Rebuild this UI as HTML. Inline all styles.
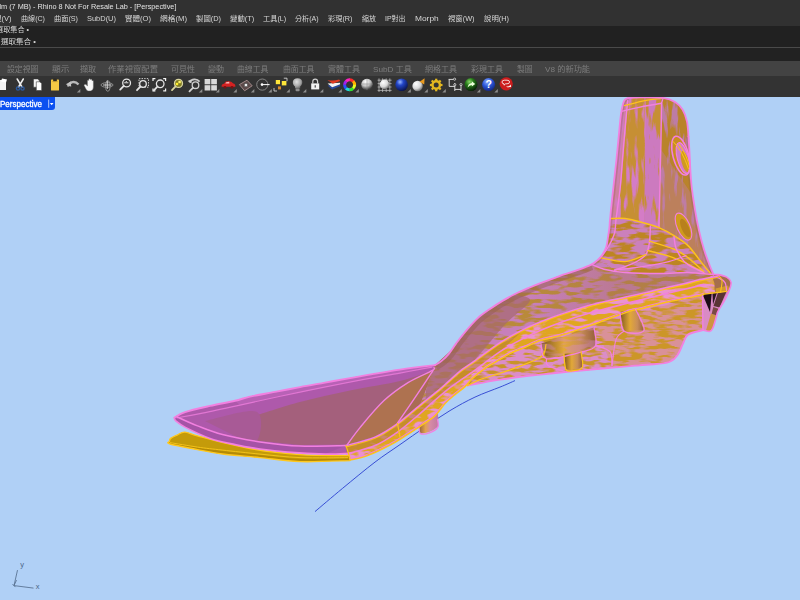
<!DOCTYPE html>
<html lang="zh-Hant">
<head>
<meta charset="utf-8">
<title>Rhino 8 - Perspective</title>
<style>
html,body{margin:0;padding:0;}
body{width:800px;height:600px;overflow:hidden;background:#b0d0f6;font-family:"Liberation Sans","Noto Sans CJK TC",sans-serif;position:relative;}
.abs{position:absolute;white-space:nowrap;}
#title{left:0;top:0;width:800px;height:13px;background:#313131;}
#menu{left:0;top:13px;width:800px;height:13px;background:#313131;}
#hist{left:0;top:26px;width:800px;height:21px;background:#212121;}
#sep{left:0;top:47px;width:800px;height:1px;background:#4a4a4a;}
#cmd{left:0;top:48px;width:800px;height:13px;background:#222222;}
#tabs{left:0;top:61px;width:800px;height:15px;background:#434343;}
#tools{left:0;top:76px;width:800px;height:21.4px;background:#333333;}
#vp{left:0;top:97px;width:800px;height:503px;background:#b0d0f6;}
#persp{left:0;top:97px;width:55px;height:13px;background:#0b50f0;border-radius:0 0 3px 0;}
.t{position:absolute;white-space:nowrap;transform-origin:0 50%;display:block;}
</style>
</head>
<body>
<div id="vp" class="abs"></div>
<div id="title" class="abs"></div>
<div id="menu" class="abs"></div>
<div id="hist" class="abs"></div>
<div id="sep" class="abs"></div>
<div id="cmd" class="abs"></div>
<div id="tabs" class="abs"></div>
<div id="tools" class="abs"></div>
<div id="persp" class="abs"></div>
<svg id="model" class="abs" style="left:0;top:97.4px;overflow:hidden" width="800" height="502.6" viewBox="0 97.4 800 502.6">
<defs>
<filter id="mH" x="0" y="0" width="100%" height="100%">
<feTurbulence type="fractalNoise" baseFrequency="0.07 0.26" numOctaves="2" seed="7" result="n"/>
<feColorMatrix in="n" type="matrix" values="0 0 0 0 0  0 0 0 0 0  0 0 0 0 0  5 5 0 0 -4.4" result="m"/>
<feGaussianBlur in="m" stdDeviation="0.45" result="mb"/>
<feComposite in="SourceGraphic" in2="mb" operator="in"/>
</filter>
<filter id="mH2" x="0" y="0" width="100%" height="100%">
<feTurbulence type="fractalNoise" baseFrequency="0.06 0.2" numOctaves="2" seed="21" result="n"/>
<feColorMatrix in="n" type="matrix" values="0 0 0 0 0  0 0 0 0 0  0 0 0 0 0  5 5 0 0 -4.55" result="m"/>
<feGaussianBlur in="m" stdDeviation="0.45" result="mb"/>
<feComposite in="SourceGraphic" in2="mb" operator="in"/>
</filter>
<filter id="mV" x="0" y="0" width="100%" height="100%">
<feTurbulence type="fractalNoise" baseFrequency="0.14 0.025" numOctaves="3" seed="5" result="n"/>
<feColorMatrix in="n" type="matrix" values="0 0 0 0 0  0 0 0 0 0  0 0 0 0 0  5 5 0 0 -4.85" result="m"/>
<feGaussianBlur in="m" stdDeviation="0.45" result="mb"/>
<feComposite in="SourceGraphic" in2="mb" operator="in"/>
</filter>
<filter id="mV2" x="0" y="0" width="100%" height="100%">
<feTurbulence type="fractalNoise" baseFrequency="0.16 0.03" numOctaves="3" seed="11" result="n"/>
<feColorMatrix in="n" type="matrix" values="0 0 0 0 0  0 0 0 0 0  0 0 0 0 0  5 5 0 0 -5.15" result="m"/>
<feGaussianBlur in="m" stdDeviation="0.45" result="mb"/>
<feComposite in="SourceGraphic" in2="mb" operator="in"/>
</filter>
<filter id="mB" x="0" y="0" width="100%" height="100%">
<feTurbulence type="fractalNoise" baseFrequency="0.07 0.2" numOctaves="2" seed="33" result="n"/>
<feColorMatrix in="n" type="matrix" values="0 0 0 0 0  0 0 0 0 0  0 0 0 0 0  5 5 0 0 -4.85" result="m"/>
<feGaussianBlur in="m" stdDeviation="0.45" result="mb"/>
<feComposite in="SourceGraphic" in2="mb" operator="in"/>
</filter>
<filter id="mH3" x="0" y="0" width="100%" height="100%">
<feTurbulence type="fractalNoise" baseFrequency="0.06 0.22" numOctaves="2" seed="14" result="n"/>
<feColorMatrix in="n" type="matrix" values="0 0 0 0 0  0 0 0 0 0  0 0 0 0 0  5 5 0 0 -4.3" result="m"/>
<feGaussianBlur in="m" stdDeviation="0.45" result="mb"/>
<feComposite in="SourceGraphic" in2="mb" operator="in"/>
</filter>
<clipPath id="cBody"><path d="M628.0 98.5 C630.0 98.4 634.2 97.8 640.0 97.8 C645.8 97.8 657.2 97.5 663.0 98.3 C668.8 99.1 671.8 100.5 675.0 102.5 C678.2 104.5 680.5 106.8 682.5 110.0 C684.5 113.2 686.0 117.5 687.0 122.0 C688.0 126.5 688.2 134.5 688.5 137.0 L688.5 137.0 C688.7 139.6 689.2 146.6 689.5 152.5 C689.8 158.4 690.1 166.2 690.5 172.5 C690.9 178.8 691.2 183.8 692.0 190.0 C692.8 196.2 693.9 203.3 695.0 210.0 C696.1 216.7 697.3 223.3 698.8 230.0 C700.3 236.7 702.1 243.9 704.0 250.0 C705.9 256.1 708.4 262.5 710.0 266.7 C711.6 270.9 712.9 273.6 713.5 275.0 L713.5 275.0 C714.2 275.2 717.2 276.2 718.0 276.5 L718.0 276.5 C715.0 277.1 705.5 278.8 700.0 280.0 C694.5 281.2 691.7 282.2 685.0 283.8 C678.3 285.4 668.3 287.6 660.0 289.5 C651.7 291.4 645.0 293.2 635.0 295.5 C625.0 297.8 610.0 300.6 600.0 303.0 C590.0 305.4 583.3 307.4 575.0 310.0 C566.7 312.6 558.3 315.3 550.0 318.5 C541.7 321.7 533.3 324.9 525.0 329.0 C516.7 333.1 508.3 337.7 500.0 343.0 C491.7 348.3 481.7 356.2 475.0 361.0 C468.3 365.8 465.7 366.9 460.0 371.5 C454.3 376.1 447.7 382.8 441.0 388.5 C434.3 394.2 423.5 402.7 420.0 405.5 L420.0 405.5 C421.3 402.1 425.5 391.7 428.0 385.0 C430.5 378.3 433.8 368.8 435.0 365.5 L435.0 365.5 C436.2 364.8 439.7 362.9 442.0 361.0 C444.3 359.1 446.7 356.8 449.0 354.0 C451.3 351.2 453.3 347.6 456.0 344.0 C458.7 340.4 461.4 336.7 465.0 332.5 C468.6 328.3 473.3 322.7 477.5 318.8 C481.7 314.9 485.8 312.3 490.0 309.4 C494.2 306.5 498.3 303.8 502.5 301.3 C506.7 298.8 510.8 296.5 515.0 294.4 C519.2 292.3 523.3 290.6 527.5 288.8 C531.7 287.0 534.6 285.9 540.0 283.8 C545.4 281.7 553.5 278.5 560.0 276.2 C566.5 273.9 573.6 271.9 578.8 270.0 C584.0 268.1 588.1 266.6 591.2 265.0 C594.3 263.4 595.6 262.3 597.5 260.6 C599.4 258.9 601.0 257.2 602.5 255.0 C604.0 252.8 605.3 250.4 606.2 247.5 C607.1 244.6 607.5 240.8 608.0 237.5 C608.5 234.2 609.1 230.9 609.4 228.0 C609.7 225.1 609.6 223.8 610.0 220.0 C610.4 216.2 610.8 211.3 611.5 205.0 C612.2 198.7 613.2 189.6 614.0 182.0 C614.8 174.4 615.7 167.0 616.5 159.5 C617.3 152.0 618.0 144.5 618.7 137.0 C619.5 129.5 620.1 120.4 621.0 114.5 C621.9 108.6 622.8 104.2 624.0 101.5 C625.2 98.8 627.3 99.0 628.0 98.5 Z"/></clipPath>
</defs>
<path d="M515.0 381.0 C512.5 382.1 506.7 384.8 500.0 387.5 C493.3 390.2 483.3 393.6 475.0 397.5 C466.7 401.4 458.3 406.0 450.0 411.0 C441.7 416.0 433.3 421.8 425.0 427.5 C416.7 433.2 408.3 439.2 400.0 445.0 C391.7 450.8 384.6 455.2 375.0 462.5 C365.4 469.8 352.5 480.6 342.5 488.8 C332.5 497.1 319.6 508.1 315.0 512.0" fill="none" stroke="#2a3fd0" stroke-width="0.9"/>
<path d="M169.4 441.9 C169.6 441.4 169.3 439.9 170.6 438.8 C171.9 437.7 174.6 436.6 177.0 435.5 C179.4 434.4 181.2 432.2 185.0 432.5 C188.8 432.8 189.2 434.2 200.0 437.0 C210.8 439.8 233.3 446.0 250.0 449.0 C266.7 452.0 283.3 453.8 300.0 455.0 C316.7 456.2 341.7 455.8 350.0 456.0 L350.0 461.0 C341.7 461.2 315.0 462.5 300.0 462.0 C285.0 461.5 272.9 459.3 260.0 458.0 C247.1 456.7 232.9 455.7 222.5 454.4 C212.1 453.1 206.2 451.7 197.5 450.0 C188.8 448.3 174.7 445.8 170.0 444.4 C165.3 443.0 169.5 442.3 169.4 441.9 Z" fill="#c49b0a"/>
<path d="M170.0 443.0 C174.6 443.8 188.8 446.6 197.5 448.0 C206.2 449.4 212.1 450.2 222.5 451.5 C232.9 452.8 247.1 454.2 260.0 455.5 C272.9 456.8 285.0 458.9 300.0 459.5 C315.0 460.1 341.7 459.1 350.0 459.0 L350.0 461.0 C341.7 461.2 315.0 462.5 300.0 462.0 C285.0 461.5 272.9 459.3 260.0 458.0 C247.1 456.7 232.9 455.7 222.5 454.4 C212.1 453.1 206.2 451.7 197.5 450.0 C188.8 448.3 174.6 445.3 170.0 444.4 Z" fill="#b48a06"/>
<path d="M169.4 441.9 C169.6 441.4 169.3 439.9 170.6 438.8 C171.9 437.7 174.6 436.6 177.0 435.5 C179.4 434.4 181.2 432.2 185.0 432.5 C188.8 432.8 189.2 434.2 200.0 437.0 C210.8 439.8 233.3 446.0 250.0 449.0 C266.7 452.0 283.3 453.8 300.0 455.0 C316.7 456.2 341.7 455.8 350.0 456.0 L350.0 461.0 C341.7 461.2 315.0 462.5 300.0 462.0 C285.0 461.5 272.9 459.3 260.0 458.0 C247.1 456.7 232.9 455.7 222.5 454.4 C212.1 453.1 206.2 451.7 197.5 450.0 C188.8 448.3 174.7 445.8 170.0 444.4 C165.3 443.0 169.5 442.3 169.4 441.9 Z" fill="none" stroke="#ffc81e" stroke-width="1.4" stroke-linejoin="round"/>
<path d="M170.0 443.0 C174.6 443.8 188.8 446.2 197.5 447.5 C206.2 448.8 212.1 449.3 222.5 450.5 C232.9 451.7 247.1 453.2 260.0 454.5 C272.9 455.8 285.3 457.4 300.0 458.0 C314.7 458.6 340.0 458.0 348.0 458.0" fill="none" stroke="#f2c21a" stroke-width="1.0"/>
<path d="M435.0 365.5 C429.2 366.2 414.2 367.8 400.0 370.0 C385.8 372.2 362.5 376.3 350.0 378.5 C337.5 380.7 333.3 381.5 325.0 383.0 C316.7 384.5 308.3 385.9 300.0 387.5 C291.7 389.1 283.3 390.7 275.0 392.3 C266.7 393.9 256.7 395.5 250.0 397.0 C243.3 398.5 241.7 399.6 235.0 401.2 C228.3 402.8 218.3 404.4 210.0 406.3 C201.7 408.2 190.9 410.6 185.0 412.5 C179.1 414.4 176.2 417.1 174.4 418.0 L174.4 418.5 C174.7 419.0 174.2 420.0 176.0 421.5 C177.8 423.0 179.3 424.6 185.0 427.5 C190.7 430.4 201.7 435.9 210.0 438.8 C218.3 441.7 226.7 443.2 235.0 445.0 C243.3 446.8 251.2 448.1 260.0 449.4 C268.8 450.6 276.7 451.6 287.5 452.5 C298.3 453.4 314.6 454.3 325.0 454.5 C335.4 454.7 345.8 453.9 350.0 453.8 L350.0 453.8 C354.2 452.0 366.7 447.3 375.0 443.0 C383.3 438.7 390.8 434.5 400.0 428.0 C409.2 421.5 420.8 412.0 430.0 404.0 C439.2 396.0 448.3 389.0 455.0 380.0 C461.7 371.0 473.3 352.4 470.0 350.0 C466.7 347.6 440.8 362.9 435.0 365.5 Z" fill="#ae59ab"/>
<path d="M435.0 365.5 C429.2 366.2 414.2 367.8 400.0 370.0 C385.8 372.2 362.5 376.3 350.0 378.5 C337.5 380.7 333.3 381.5 325.0 383.0 C316.7 384.5 308.3 385.9 300.0 387.5 C291.7 389.1 283.3 390.7 275.0 392.3 C266.7 393.9 256.7 395.5 250.0 397.0 C243.3 398.5 237.5 400.5 235.0 401.2 L240.0 405.5 C250.0 403.2 280.0 396.2 300.0 392.0 C320.0 387.8 343.3 383.1 360.0 380.0 C376.7 376.9 388.0 375.6 400.0 373.5 C412.0 371.4 426.7 368.5 432.0 367.5 Z" fill="#b862b6"/>
<path d="M256.0 416.0 C263.3 413.8 284.3 406.7 300.0 402.5 C315.7 398.3 333.3 394.5 350.0 391.0 C366.7 387.5 386.3 384.8 400.0 381.5 C413.7 378.2 426.7 372.8 432.0 371.0 L408.0 383.0 C404.0 386.0 392.0 393.5 384.0 401.0 C376.0 408.5 366.2 420.7 360.0 428.0 C353.8 435.3 348.8 442.2 346.5 445.0 L300.0 445.5 C292.8 444.8 264.2 441.8 257.0 441.0 Z" fill="#a4607c"/>
<path d="M205.0 421.5 C213.5 419.9 247.3 408.8 256.0 412.0 C264.7 415.2 260.5 436.9 257.0 441.0 C253.5 445.1 238.7 437.2 235.0 436.5 Z" fill="#a85a96"/>
<path d="M432.0 371.0 C428.0 373.0 416.0 378.0 408.0 383.0 C400.0 388.0 392.0 393.5 384.0 401.0 C376.0 408.5 366.2 420.6 360.0 428.0 C353.8 435.4 348.8 442.6 346.5 445.5 L375.0 437.0 C378.8 434.8 390.8 430.0 397.5 423.5 C404.2 417.0 409.2 406.5 415.0 398.0 C420.8 389.5 429.2 376.8 432.0 372.5 Z" fill="#ae7250"/>
<path d="M435.0 365.5 C434.7 366.4 436.3 365.6 433.0 371.0 C429.7 376.4 420.9 389.2 415.0 398.0 C409.1 406.8 400.4 419.2 397.5 423.5 L420.0 405.5 C423.5 402.7 434.3 394.2 441.0 388.5 C447.7 382.8 458.2 377.9 460.0 371.5 C461.8 365.1 453.3 353.6 452.0 350.0 Z" fill="#a96c54"/>
<path d="M176.3 416.9 C179.8 418.5 189.8 423.3 197.5 426.3 C205.2 429.3 212.1 432.3 222.5 435.0 C232.9 437.7 247.1 440.4 260.0 442.3 C272.9 444.2 285.7 445.9 300.0 446.5 C314.3 447.1 338.3 446.1 346.0 446.0 L325.0 454.5 C318.8 454.2 298.3 453.4 287.5 452.5 C276.7 451.6 268.8 450.6 260.0 449.4 C251.2 448.1 243.3 446.8 235.0 445.0 C226.7 443.2 218.3 441.7 210.0 438.8 C201.7 435.9 190.7 430.4 185.0 427.5 C179.3 424.6 177.8 423.0 176.0 421.5 C174.2 420.0 174.7 419.0 174.4 418.5 Z" fill="#a553a6"/>
<path d="M703.0 330.5 C700.5 331.2 691.3 332.8 688.0 335.0 C684.7 337.2 684.8 340.5 683.0 344.0 C681.2 347.5 679.7 352.8 677.0 356.0 C674.3 359.2 674.0 361.3 667.0 363.0 C660.0 364.7 645.3 365.0 635.0 366.0 C624.7 367.0 616.7 367.7 605.0 368.8 C593.3 369.9 575.8 371.5 565.0 372.5 C554.2 373.5 550.8 373.8 540.0 375.0 C529.2 376.2 512.1 378.2 500.0 380.0 C487.9 381.8 472.9 385.0 467.5 386.0 L467.5 386.0 L465.0 387.0 C466.2 385.6 469.2 381.8 472.5 378.8 C475.8 375.8 480.8 371.7 485.0 368.8 C489.2 365.9 493.3 363.8 497.5 361.3 C501.7 358.8 505.8 355.9 510.0 353.8 C514.2 351.7 517.5 350.9 522.5 348.8 C527.5 346.7 533.8 343.1 540.0 341.0 C546.2 338.9 551.7 338.5 560.0 336.0 C568.3 333.5 578.3 330.1 590.0 326.0 C601.7 321.9 621.7 314.2 630.0 311.5 C638.3 308.8 633.8 311.0 640.0 309.5 C646.2 308.0 657.5 304.8 667.5 302.5 C677.5 300.2 694.1 297.2 700.0 296.0 C705.9 294.8 702.5 295.2 703.0 295.0 L703.0 295.0 C703.0 300.9 703.0 324.6 703.0 330.5 Z" fill="#c99428"/>
<path d="M703.0 330.5 C700.5 331.2 691.3 332.8 688.0 335.0 C684.7 337.2 684.8 340.5 683.0 344.0 C681.2 347.5 679.7 352.8 677.0 356.0 C674.3 359.2 674.0 361.3 667.0 363.0 C660.0 364.7 645.3 365.0 635.0 366.0 C624.7 367.0 616.7 367.7 605.0 368.8 C593.3 369.9 575.8 371.5 565.0 372.5 C554.2 373.5 550.8 373.8 540.0 375.0 C529.2 376.2 512.1 378.2 500.0 380.0 C487.9 381.8 472.9 385.0 467.5 386.0 L467.5 386.0 L465.0 387.0 C466.2 385.6 469.2 381.8 472.5 378.8 C475.8 375.8 480.8 371.7 485.0 368.8 C489.2 365.9 493.3 363.8 497.5 361.3 C501.7 358.8 505.8 355.9 510.0 353.8 C514.2 351.7 517.5 350.9 522.5 348.8 C527.5 346.7 533.8 343.1 540.0 341.0 C546.2 338.9 551.7 338.5 560.0 336.0 C568.3 333.5 578.3 330.1 590.0 326.0 C601.7 321.9 621.7 314.2 630.0 311.5 C638.3 308.8 633.8 311.0 640.0 309.5 C646.2 308.0 657.5 304.8 667.5 302.5 C677.5 300.2 694.1 297.2 700.0 296.0 C705.9 294.8 702.5 295.2 703.0 295.0 L703.0 295.0 C703.0 300.9 703.0 324.6 703.0 330.5 Z" fill="#db8dc8" filter="url(#mH)"/>
<path d="M596 326 L703 295 L703 330.5 L688 335 L677 356 L667 363 L612 368 Z" fill="#d39c2a" opacity="0.3"/>
<path d="M628.0 98.5 C630.0 98.4 634.2 97.8 640.0 97.8 C645.8 97.8 657.2 97.5 663.0 98.3 C668.8 99.1 671.8 100.5 675.0 102.5 C678.2 104.5 680.5 106.8 682.5 110.0 C684.5 113.2 686.0 117.5 687.0 122.0 C688.0 126.5 688.2 134.5 688.5 137.0 L688.5 137.0 C688.7 139.6 689.2 146.6 689.5 152.5 C689.8 158.4 690.1 166.2 690.5 172.5 C690.9 178.8 691.2 183.8 692.0 190.0 C692.8 196.2 693.9 203.3 695.0 210.0 C696.1 216.7 697.3 223.3 698.8 230.0 C700.3 236.7 702.1 243.9 704.0 250.0 C705.9 256.1 708.4 262.5 710.0 266.7 C711.6 270.9 712.9 273.6 713.5 275.0 L713.5 275.0 C714.2 275.2 717.2 276.2 718.0 276.5 L718.0 276.5 C715.0 277.1 705.5 278.8 700.0 280.0 C694.5 281.2 691.7 282.2 685.0 283.8 C678.3 285.4 668.3 287.6 660.0 289.5 C651.7 291.4 645.0 293.2 635.0 295.5 C625.0 297.8 610.0 300.6 600.0 303.0 C590.0 305.4 583.3 307.4 575.0 310.0 C566.7 312.6 558.3 315.3 550.0 318.5 C541.7 321.7 533.3 324.9 525.0 329.0 C516.7 333.1 508.3 337.7 500.0 343.0 C491.7 348.3 481.7 356.2 475.0 361.0 C468.3 365.8 465.7 366.9 460.0 371.5 C454.3 376.1 447.7 382.8 441.0 388.5 C434.3 394.2 423.5 402.7 420.0 405.5 L420.0 405.5 C421.3 402.1 425.5 391.7 428.0 385.0 C430.5 378.3 433.8 368.8 435.0 365.5 L435.0 365.5 C436.2 364.8 439.7 362.9 442.0 361.0 C444.3 359.1 446.7 356.8 449.0 354.0 C451.3 351.2 453.3 347.6 456.0 344.0 C458.7 340.4 461.4 336.7 465.0 332.5 C468.6 328.3 473.3 322.7 477.5 318.8 C481.7 314.9 485.8 312.3 490.0 309.4 C494.2 306.5 498.3 303.8 502.5 301.3 C506.7 298.8 510.8 296.5 515.0 294.4 C519.2 292.3 523.3 290.6 527.5 288.8 C531.7 287.0 534.6 285.9 540.0 283.8 C545.4 281.7 553.5 278.5 560.0 276.2 C566.5 273.9 573.6 271.9 578.8 270.0 C584.0 268.1 588.1 266.6 591.2 265.0 C594.3 263.4 595.6 262.3 597.5 260.6 C599.4 258.9 601.0 257.2 602.5 255.0 C604.0 252.8 605.3 250.4 606.2 247.5 C607.1 244.6 607.5 240.8 608.0 237.5 C608.5 234.2 609.1 230.9 609.4 228.0 C609.7 225.1 609.6 223.8 610.0 220.0 C610.4 216.2 610.8 211.3 611.5 205.0 C612.2 198.7 613.2 189.6 614.0 182.0 C614.8 174.4 615.7 167.0 616.5 159.5 C617.3 152.0 618.0 144.5 618.7 137.0 C619.5 129.5 620.1 120.4 621.0 114.5 C621.9 108.6 622.8 104.2 624.0 101.5 C625.2 98.8 627.3 99.0 628.0 98.5 Z" fill="#c27a86"/>
<g clip-path="url(#cBody)">
<path d="M600 95 H661.5 L659 228 L611 219 Z" fill="#c68f34"/>
<path d="M600 95 H661.5 L659 228 L611 219 Z" fill="#d47cc6" filter="url(#mV)"/>
<path d="M646 100 L661.5 100 L659 227 L644 223 Z" fill="#cc7abf"/>
<path d="M646 100 L661.5 100 L659 227 L644 223 Z" fill="#c68f34" filter="url(#mV2)"/>
<path d="M600 95 L628.5 95 L621.5 182 L616.5 222 L600 240 Z" fill="#d07cc0" opacity="0.75"/>
<path d="M661.5 95 H700 L720 280 L659 228 Z" fill="#b9832b"/>
<path d="M661.5 95 H700 L720 280 L659 228 Z" fill="#bd7ca6" filter="url(#mV2)"/>
<path d="M661 150 L692 195 L720 280 L659 228 Z" fill="#c07ca8" opacity="0.4"/>
<path d="M611.0 218.9 C613.3 218.9 619.8 218.2 625.0 218.9 C630.2 219.6 636.7 221.4 642.5 223.0 C648.3 224.6 654.8 226.3 660.0 228.5 C665.2 230.7 669.3 233.1 674.0 236.0 C678.7 238.9 683.3 241.4 688.0 246.0 C692.7 250.6 698.0 258.7 702.0 263.5 C706.0 268.3 710.3 273.1 712.0 275.0 L688.0 273.0 C683.3 273.2 670.5 274.0 660.0 274.0 C649.5 274.0 634.3 273.7 625.0 273.0 C615.7 272.3 609.8 270.9 604.0 269.6 C598.2 268.3 592.3 265.8 590.0 265.0 Z" fill="#cb80bb"/>
<path d="M611.0 218.9 C613.3 218.9 619.8 218.2 625.0 218.9 C630.2 219.6 636.7 221.4 642.5 223.0 C648.3 224.6 654.8 226.3 660.0 228.5 C665.2 230.7 669.3 233.1 674.0 236.0 C678.7 238.9 683.3 241.4 688.0 246.0 C692.7 250.6 698.0 258.7 702.0 263.5 C706.0 268.3 710.3 273.1 712.0 275.0 L688.0 273.0 C683.3 273.2 670.5 274.0 660.0 274.0 C649.5 274.0 634.3 273.7 625.0 273.0 C615.7 272.3 609.8 270.9 604.0 269.6 C598.2 268.3 592.3 265.8 590.0 265.0 Z" fill="#bd8524" filter="url(#mH2)"/>
<path d="M420.0 420.0 C421.7 410.0 421.7 376.7 430.0 360.0 C438.3 343.3 455.0 332.5 470.0 320.0 C485.0 307.5 500.0 294.7 520.0 285.0 C540.0 275.3 572.5 264.0 590.0 262.0 C607.5 260.0 608.7 271.2 625.0 273.0 C641.3 274.8 672.2 272.5 688.0 273.0 C703.8 273.5 714.7 275.5 720.0 276.0 L720.0 300.0 C670.0 320.0 470.0 400.0 420.0 420.0 Z" fill="#b98a3a"/>
<path d="M420.0 420.0 C421.7 410.0 421.7 376.7 430.0 360.0 C438.3 343.3 455.0 332.5 470.0 320.0 C485.0 307.5 500.0 294.7 520.0 285.0 C540.0 275.3 572.5 264.0 590.0 262.0 C607.5 260.0 608.7 271.2 625.0 273.0 C641.3 274.8 672.2 272.5 688.0 273.0 C703.8 273.5 714.7 275.5 720.0 276.0 L720.0 300.0 C670.0 320.0 470.0 400.0 420.0 420.0 Z" fill="#c77fbc" filter="url(#mH3)"/>
<path d="M425.0 410.0 C426.2 402.3 424.5 378.7 432.0 364.0 C439.5 349.3 458.7 333.0 470.0 322.0 C481.3 311.0 490.0 301.7 500.0 298.0 C510.0 294.3 529.2 295.5 530.0 300.0 C530.8 304.5 514.2 315.0 505.0 325.0 C495.8 335.0 484.2 350.2 475.0 360.0 C465.8 369.8 454.2 380.0 450.0 384.0 Z" fill="#a5686e" opacity="0.7"/>
<defs><linearGradient id="hz" gradientUnits="userSpaceOnUse" x1="530" x2="620" y1="0" y2="0"><stop offset="0" stop-color="#a87058" stop-opacity="0"/><stop offset="1" stop-color="#a87058" stop-opacity="0.42"/></linearGradient></defs>
<path d="M592 265 L604 269.6 L625 273 L660 274 L688 273 L714 275.5 L700 280 L660 289.5 L600 303 L520 332 L520 290 Z" fill="url(#hz)"/>
<path d="M591.2 265.0 C589.1 265.8 584.0 268.1 578.8 270.0 C573.6 271.9 566.5 273.9 560.0 276.2 C553.5 278.5 545.4 281.7 540.0 283.8 C534.6 285.9 531.7 287.0 527.5 288.8 C523.3 290.6 519.2 292.3 515.0 294.4 C510.8 296.5 506.7 298.8 502.5 301.3 C498.3 303.8 494.2 306.5 490.0 309.4 C485.8 312.3 481.7 314.9 477.5 318.8 C473.3 322.7 468.6 328.3 465.0 332.5 C461.4 336.7 458.7 340.4 456.0 344.0 C453.3 347.6 451.3 351.2 449.0 354.0 C446.7 356.8 444.3 359.1 442.0 361.0 C439.7 362.9 436.2 364.8 435.0 365.5" fill="none" stroke="#96604e" stroke-width="11" opacity="0.5"/>
<path d="M628.0 98.5 C627.3 99.0 625.2 98.8 624.0 101.5 C622.8 104.2 621.9 108.6 621.0 114.5 C620.1 120.4 619.5 129.5 618.7 137.0 C618.0 144.5 617.3 152.0 616.5 159.5 C615.7 167.0 614.8 174.4 614.0 182.0 C613.2 189.6 612.2 198.7 611.5 205.0 C610.8 211.3 610.4 216.2 610.0 220.0 C609.6 223.8 609.7 225.1 609.4 228.0 C609.1 230.9 608.5 234.2 608.0 237.5 C607.5 240.8 607.1 244.6 606.2 247.5 C605.3 250.4 604.0 252.8 602.5 255.0 C601.0 257.2 599.4 258.9 597.5 260.6 C595.6 262.3 592.2 264.3 591.2 265.0" fill="none" stroke="#96604e" stroke-width="5" opacity="0.35"/>
<path d="M688.5 137.0 C688.7 139.6 689.2 146.6 689.5 152.5 C689.8 158.4 690.1 166.2 690.5 172.5 C690.9 178.8 691.2 183.8 692.0 190.0 C692.8 196.2 693.9 203.3 695.0 210.0 C696.1 216.7 697.3 223.3 698.8 230.0 C700.3 236.7 702.1 243.9 704.0 250.0 C705.9 256.1 708.4 262.5 710.0 266.7 C711.6 270.9 712.9 273.6 713.5 275.0" fill="none" stroke="#96604e" stroke-width="5" opacity="0.35"/>
</g>
<path d="M718.0 276.5 C715.0 277.1 705.5 278.8 700.0 280.0 C694.5 281.2 691.7 282.2 685.0 283.8 C678.3 285.4 668.3 287.6 660.0 289.5 C651.7 291.4 645.0 293.2 635.0 295.5 C625.0 297.8 610.0 300.6 600.0 303.0 C590.0 305.4 583.3 307.4 575.0 310.0 C566.7 312.6 558.3 315.3 550.0 318.5 C541.7 321.7 533.3 324.9 525.0 329.0 C516.7 333.1 508.3 337.7 500.0 343.0 C491.7 348.3 481.7 356.2 475.0 361.0 C468.3 365.8 465.7 366.9 460.0 371.5 C454.3 376.1 447.7 382.8 441.0 388.5 C434.3 394.2 427.2 399.6 420.0 405.5 C412.8 411.4 405.0 418.7 397.5 424.0 C390.0 429.3 383.6 433.8 375.0 437.5 C366.4 441.2 350.8 444.6 346.0 446.0 L350.0 460.5 C352.9 459.8 360.8 458.5 367.5 456.0 C374.2 453.5 383.8 448.8 390.0 445.5 C396.2 442.2 400.0 439.6 405.0 436.5 C410.0 433.4 415.0 430.2 420.0 426.8 C425.0 423.4 430.8 419.8 435.0 416.0 C439.2 412.2 441.7 407.5 445.0 404.0 C448.3 400.5 451.7 397.8 455.0 395.0 C458.3 392.2 462.1 389.7 465.0 387.0 C467.9 384.3 469.2 381.8 472.5 378.8 C475.8 375.8 480.8 371.7 485.0 368.8 C489.2 365.9 493.3 363.8 497.5 361.3 C501.7 358.8 505.8 355.9 510.0 353.8 C514.2 351.7 517.5 350.9 522.5 348.8 C527.5 346.7 533.8 343.1 540.0 341.0 C546.2 338.9 551.7 338.5 560.0 336.0 C568.3 333.5 578.3 330.1 590.0 326.0 C601.7 321.9 621.7 314.2 630.0 311.5 C638.3 308.8 633.8 311.0 640.0 309.5 C646.2 308.0 657.5 304.8 667.5 302.5 C677.5 300.2 694.1 297.2 700.0 296.0 C705.9 294.8 702.5 295.2 703.0 295.0 L716.0 293.2 C715.8 291.7 715.2 285.5 715.0 284.0 Z" fill="#e0a620"/>
<path d="M718.0 276.5 C715.0 277.1 705.5 278.8 700.0 280.0 C694.5 281.2 691.7 282.2 685.0 283.8 C678.3 285.4 668.3 287.6 660.0 289.5 C651.7 291.4 645.0 293.2 635.0 295.5 C625.0 297.8 610.0 300.6 600.0 303.0 C590.0 305.4 583.3 307.4 575.0 310.0 C566.7 312.6 558.3 315.3 550.0 318.5 C541.7 321.7 533.3 324.9 525.0 329.0 C516.7 333.1 508.3 337.7 500.0 343.0 C491.7 348.3 481.7 356.2 475.0 361.0 C468.3 365.8 465.7 366.9 460.0 371.5 C454.3 376.1 447.7 382.8 441.0 388.5 C434.3 394.2 427.2 399.6 420.0 405.5 C412.8 411.4 405.0 418.7 397.5 424.0 C390.0 429.3 383.6 433.8 375.0 437.5 C366.4 441.2 350.8 444.6 346.0 446.0 L350.0 460.5 C352.9 459.8 360.8 458.5 367.5 456.0 C374.2 453.5 383.8 448.8 390.0 445.5 C396.2 442.2 400.0 439.6 405.0 436.5 C410.0 433.4 415.0 430.2 420.0 426.8 C425.0 423.4 430.8 419.8 435.0 416.0 C439.2 412.2 441.7 407.5 445.0 404.0 C448.3 400.5 451.7 397.8 455.0 395.0 C458.3 392.2 462.1 389.7 465.0 387.0 C467.9 384.3 469.2 381.8 472.5 378.8 C475.8 375.8 480.8 371.7 485.0 368.8 C489.2 365.9 493.3 363.8 497.5 361.3 C501.7 358.8 505.8 355.9 510.0 353.8 C514.2 351.7 517.5 350.9 522.5 348.8 C527.5 346.7 533.8 343.1 540.0 341.0 C546.2 338.9 551.7 338.5 560.0 336.0 C568.3 333.5 578.3 330.1 590.0 326.0 C601.7 321.9 621.7 314.2 630.0 311.5 C638.3 308.8 633.8 311.0 640.0 309.5 C646.2 308.0 657.5 304.8 667.5 302.5 C677.5 300.2 694.1 297.2 700.0 296.0 C705.9 294.8 702.5 295.2 703.0 295.0 L716.0 293.2 C715.8 291.7 715.2 285.5 715.0 284.0 Z" fill="#ea93cf" filter="url(#mB)"/>
<path d="M525.0 329.0 C520.8 331.3 508.3 337.7 500.0 343.0 C491.7 348.3 481.7 356.2 475.0 361.0 C468.3 365.8 465.7 366.9 460.0 371.5 C454.3 376.1 447.7 382.8 441.0 388.5 C434.3 394.2 427.2 399.6 420.0 405.5 C412.8 411.4 405.0 418.7 397.5 424.0 C390.0 429.3 383.6 433.8 375.0 437.5 C366.4 441.2 350.8 444.6 346.0 446.0 L346.5 454.5 C351.2 453.1 366.5 449.7 375.0 446.0 C383.5 442.3 390.0 437.8 397.5 432.5 C405.0 427.2 414.6 418.6 420.0 414.0 C425.4 409.4 425.0 409.3 430.0 405.0 C435.0 400.7 442.5 393.8 450.0 388.0 C457.5 382.2 466.7 376.5 475.0 370.5 C483.3 364.5 495.8 355.1 500.0 352.0 Z" fill="#b07a30" opacity="0.55"/>
<defs><linearGradient id="cyl" x1="0" x2="1" y1="0" y2="0"><stop offset="0" stop-color="#80581e"/><stop offset="0.42" stop-color="#e2a838"/><stop offset="0.72" stop-color="#c98e58"/><stop offset="1" stop-color="#96603c"/></linearGradient></defs>
<path d="M541 344 L594 328 L595.5 346 L581 352.5 L546.5 359 Z" fill="url(#cyl)"/>
<path d="M541 344 L594 328 L595.5 346 L581 352.5 L546.5 359 Z" fill="#d88aca" filter="url(#mH2)" opacity="0.4"/>
<path d="M564 354.5 L581 352 L582.5 367.5 Q574 371.5 566 370 Z" fill="url(#cyl)"/>
<path d="M620 312.5 L635.5 309.5 L644 331 L624 331.5 Z" fill="url(#cyl)"/>
<defs><linearGradient id="peg" x1="0" x2="1" y1="0" y2="0"><stop offset="0" stop-color="#8c5a44"/><stop offset="0.35" stop-color="#e2a24a"/><stop offset="0.6" stop-color="#d68aa6"/><stop offset="1" stop-color="#c07aa0"/></linearGradient></defs>
<path d="M418.5 426 L438 413.5 L438.3 427 Q430 434 420.5 434 Z" fill="url(#peg)"/>
<path d="M419.0 427.5 C419.2 428.6 418.7 433.1 420.5 434.0 C422.3 434.9 427.1 434.1 430.0 433.0 C432.9 431.9 436.6 429.7 437.8 427.5 C439.1 425.3 437.6 421.2 437.5 420.0" fill="none" stroke="#f280e0" stroke-width="1.2" stroke-linecap="round" stroke-linejoin="round" opacity="1"/>
<path d="M702 294.7 L726.7 291.7 L729.5 290 L725 300 L718 311.7 L716.7 316 L713 328 L710 331.7 L702 330.5 Z" fill="#d98bc4"/>
<path d="M711 314 L716.7 316 L713 328 L710 331.7 L706 331 Z" fill="#cf9440"/>
<path d="M702.5 294.7 L711.7 293.7 L710 312.5 Z" fill="#1c0c14"/>
<path d="M712.5 293.6 L717 293 L713 305 Z" fill="#2a1420"/>
<path d="M718 293 L726.7 291.7 L719.5 308 L713.5 306.5 Z" fill="#5a3434"/>
<path d="M713.3 307.5 L718.5 309.2 L716.7 316 L711.7 314.2 Z" fill="#7a4a44"/>
<path d="M712.0 276.5 C713.0 276.2 715.5 274.8 718.0 275.0 C720.5 275.2 724.5 276.2 726.7 277.5 C728.9 278.8 730.5 280.4 731.0 282.5 C731.5 284.6 729.8 288.8 729.5 290.0 L726.7 291.7 C724.9 291.9 718.0 294.5 716.0 293.2 C714.0 291.9 714.8 285.5 714.5 284.0 Z" fill="#a66e4c"/>
<path d="M715.5 289 L728 285.8 L729.5 290 L726.7 291.7 L716 293.2 Z" fill="#d39a2c"/>
<path d="M711.0 277.0 C712.3 277.2 716.7 277.5 719.0 278.5 C721.3 279.5 723.7 280.8 725.0 283.0 C726.3 285.2 726.4 290.2 726.7 291.7" fill="none" stroke="#f280e0" stroke-width="1.2" stroke-linecap="round" stroke-linejoin="round" opacity="1"/>
<path d="M718.0 275.5 C718.7 276.4 721.6 278.2 722.0 281.0 C722.4 283.8 720.8 290.6 720.5 292.5" fill="none" stroke="#fdc21c" stroke-width="1.1" stroke-linecap="round" stroke-linejoin="round" opacity="1"/>
<g transform="translate(680.8 156) rotate(-15)"><ellipse rx="7.8" ry="20" fill="#c98c22"/><ellipse cx="1.4" cy="3" rx="5.6" ry="16" fill="#d27cc4"/><ellipse cx="2.6" cy="7" rx="3.6" ry="11" fill="#cf9a1e"/><ellipse rx="7.8" ry="20" fill="none" stroke="#f280e0" stroke-width="1.5"/><ellipse cx="1.4" cy="3" rx="5.6" ry="16" fill="none" stroke="#f280e0" stroke-width="1.1"/><path d="M-4 -16 Q3 -4 4 15 M1 -12 Q6 0 5.5 14" fill="none" stroke="#fdc21c" stroke-width="0.9"/></g>
<g transform="translate(683.5 227) rotate(-24)"><ellipse rx="6.4" ry="14.5" fill="#cf9a1e"/><ellipse rx="6.4" ry="14.5" fill="none" stroke="#f280e0" stroke-width="1.1"/><ellipse cx="1" cy="2" rx="3.6" ry="10" fill="#b8801c"/></g>
<path d="M627.7 101.0 C627.2 105.8 625.9 120.2 625.0 130.0 C624.1 139.8 623.3 150.0 622.5 160.0 C621.7 170.0 621.1 180.0 620.0 190.0 C618.9 200.0 616.9 212.7 616.0 220.0 C615.1 227.3 615.7 229.4 614.5 233.7 C613.3 238.0 611.3 241.9 609.0 246.0 C606.7 250.1 603.3 254.8 600.5 258.0 C597.7 261.2 593.4 263.8 592.0 265.0" fill="none" stroke="#f280e0" stroke-width="1.4" stroke-linecap="round" stroke-linejoin="round" opacity="1"/>
<path d="M622.5 111.5 C625.4 110.8 633.5 108.8 640.0 107.5 C646.5 106.2 657.9 104.3 661.5 103.7" fill="none" stroke="#f280e0" stroke-width="1.4" stroke-linecap="round" stroke-linejoin="round" opacity="1"/>
<path d="M624.5 106.0 C627.9 105.2 638.6 102.2 645.0 101.0 C651.4 99.8 660.0 99.0 663.0 98.6" fill="none" stroke="#fdc21c" stroke-width="1.2" stroke-linecap="round" stroke-linejoin="round" opacity="1"/>
<path d="M661.5 103.7 C661.4 109.8 661.2 127.0 661.0 140.0 C660.8 153.1 660.3 167.4 660.0 182.0 C659.7 196.6 659.2 220.0 659.0 227.6" fill="none" stroke="#f280e0" stroke-width="1.4" stroke-linecap="round" stroke-linejoin="round" opacity="1"/>
<path d="M663.0 99.0 C662.8 99.8 661.8 102.9 661.5 103.7" fill="none" stroke="#f280e0" stroke-width="1.2" stroke-linecap="round" stroke-linejoin="round" opacity="1"/>
<path d="M611.0 218.9 C613.3 218.9 619.8 218.2 625.0 218.9 C630.2 219.6 636.7 221.4 642.5 223.0 C648.3 224.6 654.8 226.3 660.0 228.5 C665.2 230.7 669.3 233.1 674.0 236.0 C678.7 238.9 683.3 241.4 688.0 246.0 C692.7 250.6 698.2 258.8 702.0 263.5 C705.8 268.2 709.2 272.2 710.7 274.0" fill="none" stroke="#fdc21c" stroke-width="1.5" stroke-linecap="round" stroke-linejoin="round" opacity="1"/>
<path d="M650.4 226.7 C650.2 229.3 650.2 237.8 649.5 242.5 C648.8 247.2 648.1 251.5 646.0 254.7 C643.9 257.9 640.5 259.6 637.0 261.7 C633.5 263.8 628.8 265.5 625.0 267.0 C621.2 268.5 616.2 269.9 614.5 270.5" fill="none" stroke="#f280e0" stroke-width="1.4" stroke-linecap="round" stroke-linejoin="round" opacity="1"/>
<path d="M649.5 241.6 C653.6 242.9 667.6 246.8 674.0 249.5 C680.4 252.2 683.0 254.2 688.0 258.0 C693.0 261.8 701.1 269.7 703.7 272.0" fill="none" stroke="#fdc21c" stroke-width="1.4" stroke-linecap="round" stroke-linejoin="round" opacity="1"/>
<path d="M647.7 251.0 C651.2 251.9 662.3 254.4 668.7 256.5 C675.1 258.6 680.1 260.8 686.0 263.5 C691.9 266.2 701.0 271.4 704.0 273.0" fill="none" stroke="#fdc21c" stroke-width="1.4" stroke-linecap="round" stroke-linejoin="round" opacity="1"/>
<path d="M674.0 237.0 C674.3 238.8 674.5 244.2 675.7 247.7 C676.9 251.2 679.0 255.1 681.0 258.0 C683.0 260.9 684.2 262.5 688.0 265.0 C691.8 267.5 701.1 271.7 703.7 273.0" fill="none" stroke="#f280e0" stroke-width="1.4" stroke-linecap="round" stroke-linejoin="round" opacity="1"/>
<path d="M592.0 265.0 C594.0 265.8 598.5 268.3 604.0 269.6 C609.5 270.9 615.7 272.3 625.0 273.0 C634.3 273.7 649.5 274.0 660.0 274.0 C670.5 274.0 679.2 272.8 688.0 273.0 C696.8 273.2 708.4 274.7 712.5 275.0" fill="none" stroke="#f280e0" stroke-width="1.5" stroke-linecap="round" stroke-linejoin="round" opacity="1"/>
<path d="M614.5 270.5 C619.2 269.9 633.5 268.4 642.5 267.0 C651.5 265.6 661.5 263.8 668.7 262.0 C676.0 260.2 683.1 257.0 686.0 256.0" fill="none" stroke="#f280e0" stroke-width="1.2" stroke-linecap="round" stroke-linejoin="round" opacity="1"/>
<path d="M600.0 258.0 C604.2 258.7 617.3 262.5 625.0 262.0 C632.7 261.5 642.5 256.2 646.0 255.0" fill="none" stroke="#fdc21c" stroke-width="1.2" stroke-linecap="round" stroke-linejoin="round" opacity="1"/>
<path d="M628.0 98.5 C627.3 99.0 625.2 98.8 624.0 101.5 C622.8 104.2 621.9 108.6 621.0 114.5 C620.1 120.4 619.5 129.5 618.7 137.0 C618.0 144.5 617.3 152.0 616.5 159.5 C615.7 167.0 614.8 174.4 614.0 182.0 C613.2 189.6 612.2 198.7 611.5 205.0 C610.8 211.3 610.4 216.2 610.0 220.0 C609.6 223.8 609.7 225.1 609.4 228.0 C609.1 230.9 608.5 234.2 608.0 237.5 C607.5 240.8 607.1 244.6 606.2 247.5 C605.3 250.4 604.0 252.8 602.5 255.0 C601.0 257.2 599.4 258.9 597.5 260.6 C595.6 262.3 594.3 263.4 591.2 265.0 C588.1 266.6 584.0 268.1 578.8 270.0 C573.6 271.9 566.5 273.9 560.0 276.2 C553.5 278.5 545.4 281.7 540.0 283.8 C534.6 285.9 531.7 287.0 527.5 288.8 C523.3 290.6 519.2 292.3 515.0 294.4 C510.8 296.5 506.7 298.8 502.5 301.3 C498.3 303.8 494.2 306.5 490.0 309.4 C485.8 312.3 481.7 314.9 477.5 318.8 C473.3 322.7 468.6 328.3 465.0 332.5 C461.4 336.7 458.7 340.4 456.0 344.0 C453.3 347.6 451.3 351.2 449.0 354.0 C446.7 356.8 444.3 359.1 442.0 361.0 C439.7 362.9 436.2 364.8 435.0 365.5" fill="none" stroke="#f280e0" stroke-width="1.8" stroke-linecap="round" stroke-linejoin="round" opacity="1"/>
<path d="M628.0 98.5 C630.0 98.4 634.2 97.8 640.0 97.8 C645.8 97.8 657.2 97.5 663.0 98.3 C668.8 99.1 671.8 100.5 675.0 102.5 C678.2 104.5 680.5 106.8 682.5 110.0 C684.5 113.2 686.0 117.5 687.0 122.0 C688.0 126.5 688.2 134.5 688.5 137.0" fill="none" stroke="#f280e0" stroke-width="1.8" stroke-linecap="round" stroke-linejoin="round" opacity="1"/>
<path d="M688.5 137.0 C688.7 139.6 689.2 146.6 689.5 152.5 C689.8 158.4 690.1 166.2 690.5 172.5 C690.9 178.8 691.2 183.8 692.0 190.0 C692.8 196.2 693.9 203.3 695.0 210.0 C696.1 216.7 697.3 223.3 698.8 230.0 C700.3 236.7 702.1 243.9 704.0 250.0 C705.9 256.1 708.4 262.5 710.0 266.7 C711.6 270.9 712.9 273.6 713.5 275.0" fill="none" stroke="#f280e0" stroke-width="1.8" stroke-linecap="round" stroke-linejoin="round" opacity="1"/>
<path d="M713.5 275.0 C714.2 275.0 715.8 274.6 718.0 275.0 C720.2 275.4 724.5 276.2 726.7 277.5 C728.9 278.8 730.5 280.4 731.0 282.5 C731.5 284.6 730.5 287.1 729.5 290.0 C728.5 292.9 726.9 296.4 725.0 300.0 C723.1 303.6 719.4 309.0 718.0 311.7 C716.6 314.4 717.5 313.3 716.7 316.0 C715.9 318.7 714.1 325.4 713.0 328.0 C711.9 330.6 711.7 331.3 710.0 331.7 C708.3 332.1 704.2 330.7 703.0 330.5" fill="none" stroke="#f280e0" stroke-width="1.6" stroke-linecap="round" stroke-linejoin="round" opacity="1"/>
<path d="M703.0 330.5 C700.5 331.2 691.3 332.8 688.0 335.0 C684.7 337.2 684.8 340.5 683.0 344.0 C681.2 347.5 679.7 352.8 677.0 356.0 C674.3 359.2 674.0 361.3 667.0 363.0 C660.0 364.7 645.3 365.0 635.0 366.0 C624.7 367.0 616.7 367.7 605.0 368.8 C593.3 369.9 575.8 371.5 565.0 372.5 C554.2 373.5 550.8 373.8 540.0 375.0 C529.2 376.2 512.1 378.2 500.0 380.0 C487.9 381.8 472.9 385.0 467.5 386.0" fill="none" stroke="#f280e0" stroke-width="1.9" stroke-linecap="round" stroke-linejoin="round" opacity="1"/>
<path d="M718.0 277.7 C715.0 278.3 705.5 280.0 700.0 281.2 C694.5 282.4 691.7 283.4 685.0 285.0 C678.3 286.6 668.3 288.8 660.0 290.7 C651.7 292.6 645.0 294.4 635.0 296.7 C625.0 298.9 610.0 301.8 600.0 304.2 C590.0 306.6 583.3 308.6 575.0 311.2 C566.7 313.8 558.3 316.5 550.0 319.7 C541.7 322.9 533.3 326.1 525.0 330.2 C516.7 334.3 508.3 338.9 500.0 344.2 C491.7 349.5 481.7 357.4 475.0 362.2 C468.3 366.9 465.7 368.1 460.0 372.7 C454.3 377.3 447.7 384.0 441.0 389.7 C434.3 395.4 427.2 400.8 420.0 406.7 C412.8 412.6 405.0 419.9 397.5 425.2 C390.0 430.5 383.6 435.0 375.0 438.7 C366.4 442.4 350.8 445.8 346.0 447.2" fill="none" stroke="#fdc21c" stroke-width="1.2" stroke-linecap="round" stroke-linejoin="round" opacity="0.9"/>
<path d="M718.0 276.5 C715.0 277.1 705.5 278.8 700.0 280.0 C694.5 281.2 691.7 282.2 685.0 283.8 C678.3 285.4 668.3 287.6 660.0 289.5 C651.7 291.4 645.0 293.2 635.0 295.5 C625.0 297.8 610.0 300.6 600.0 303.0 C590.0 305.4 583.3 307.4 575.0 310.0 C566.7 312.6 558.3 315.3 550.0 318.5 C541.7 321.7 533.3 324.9 525.0 329.0 C516.7 333.1 508.3 337.7 500.0 343.0 C491.7 348.3 481.7 356.2 475.0 361.0 C468.3 365.8 465.7 366.9 460.0 371.5 C454.3 376.1 447.7 382.8 441.0 388.5 C434.3 394.2 427.2 399.6 420.0 405.5 C412.8 411.4 405.0 418.7 397.5 424.0 C390.0 429.3 383.6 433.8 375.0 437.5 C366.4 441.2 350.8 444.6 346.0 446.0" fill="none" stroke="#f280e0" stroke-width="1.5" stroke-linecap="round" stroke-linejoin="round" opacity="1"/>
<path d="M703.0 293.7 C702.5 293.9 705.9 293.4 700.0 294.7 C694.1 295.9 677.5 298.9 667.5 301.2 C657.5 303.4 646.2 306.7 640.0 308.2 C633.8 309.7 638.3 307.4 630.0 310.2 C621.7 312.9 601.7 320.6 590.0 324.7 C578.3 328.8 568.3 332.2 560.0 334.7 C551.7 337.2 546.2 337.6 540.0 339.7 C533.8 341.8 527.5 345.4 522.5 347.5 C517.5 349.6 514.2 350.4 510.0 352.5 C505.8 354.6 501.7 357.5 497.5 360.0 C493.3 362.5 489.2 364.6 485.0 367.5 C480.8 370.4 475.8 374.5 472.5 377.5 C469.2 380.5 467.9 383.0 465.0 385.7 C462.1 388.4 458.3 390.9 455.0 393.7 C451.7 396.5 448.3 399.2 445.0 402.7 C441.7 406.2 439.2 410.9 435.0 414.7 C430.8 418.5 425.0 422.1 420.0 425.5 C415.0 428.9 410.0 432.1 405.0 435.2 C400.0 438.3 396.2 440.9 390.0 444.2 C383.8 447.4 374.2 452.2 367.5 454.7 C360.8 457.2 352.9 458.4 350.0 459.2" fill="none" stroke="#f280e0" stroke-width="1.2" stroke-linecap="round" stroke-linejoin="round" opacity="0.9"/>
<path d="M703.0 295.0 C702.5 295.2 705.9 294.8 700.0 296.0 C694.1 297.2 677.5 300.2 667.5 302.5 C657.5 304.8 646.2 308.0 640.0 309.5 C633.8 311.0 638.3 308.8 630.0 311.5 C621.7 314.2 601.7 321.9 590.0 326.0 C578.3 330.1 568.3 333.5 560.0 336.0 C551.7 338.5 546.2 338.9 540.0 341.0 C533.8 343.1 527.5 346.7 522.5 348.8 C517.5 350.9 514.2 351.7 510.0 353.8 C505.8 355.9 501.7 358.8 497.5 361.3 C493.3 363.8 489.2 365.9 485.0 368.8 C480.8 371.7 475.8 375.8 472.5 378.8 C469.2 381.8 467.9 384.3 465.0 387.0 C462.1 389.7 458.3 392.2 455.0 395.0 C451.7 397.8 448.3 400.5 445.0 404.0 C441.7 407.5 439.2 412.2 435.0 416.0 C430.8 419.8 425.0 423.4 420.0 426.8 C415.0 430.2 410.0 433.4 405.0 436.5 C400.0 439.6 396.2 442.2 390.0 445.5 C383.8 448.8 374.2 453.5 367.5 456.0 C360.8 458.5 352.9 459.8 350.0 460.5" fill="none" stroke="#fdc21c" stroke-width="1.5" stroke-linecap="round" stroke-linejoin="round" opacity="1"/>
<path d="M704.0 285.0 C696.7 286.8 675.7 291.7 660.0 295.5 C644.3 299.3 624.2 304.2 610.0 308.0 C595.8 311.8 585.0 314.8 575.0 318.0 C565.0 321.2 558.3 323.7 550.0 327.0 C541.7 330.3 533.3 333.8 525.0 338.0 C516.7 342.2 508.3 346.6 500.0 352.0 C491.7 357.4 483.3 364.5 475.0 370.5 C466.7 376.5 457.5 382.2 450.0 388.0 C442.5 393.8 435.0 400.7 430.0 405.0 C425.0 409.3 425.4 409.4 420.0 414.0 C414.6 418.6 405.0 427.2 397.5 432.5 C390.0 437.8 383.5 442.3 375.0 446.0 C366.5 449.7 351.2 453.1 346.5 454.5" fill="none" stroke="#f280e0" stroke-width="1.6" stroke-linecap="round" stroke-linejoin="round" opacity="0.95"/>
<path d="M467.5 386.0 C469.6 385.0 473.8 382.3 480.0 380.0 C486.2 377.7 495.0 375.7 505.0 372.0 C515.0 368.3 533.2 362.5 540.0 358.0 C546.8 353.5 545.0 347.2 546.0 345.0" fill="none" stroke="#fdc21c" stroke-width="1.2" stroke-linecap="round" stroke-linejoin="round" opacity="1"/>
<path d="M546.5 359.0 C546.8 360.2 544.9 363.8 548.0 366.0 C551.1 368.2 562.2 371.0 565.0 372.0" fill="none" stroke="#f280e0" stroke-width="1.2" stroke-linecap="round" stroke-linejoin="round" opacity="1"/>
<path d="M541.0 344.0 C541.9 346.5 539.8 357.6 546.5 359.0 C553.2 360.4 572.8 354.7 581.0 352.5 C589.2 350.3 593.3 350.1 595.5 346.0 C597.7 341.9 594.2 331.0 594.0 328.0" fill="none" stroke="#f280e0" stroke-width="1.2" stroke-linecap="round" stroke-linejoin="round" opacity="1"/>
<path d="M564.0 354.5 C564.3 357.1 564.3 367.2 566.0 370.0 C567.7 372.8 571.2 371.4 574.0 371.0 C576.8 370.6 581.3 370.7 582.5 367.5 C583.7 364.3 581.2 354.6 581.0 352.0" fill="none" stroke="#fdc21c" stroke-width="1.2" stroke-linecap="round" stroke-linejoin="round" opacity="1"/>
<path d="M620.0 312.5 C620.7 315.7 620.0 328.4 624.0 331.5 C628.0 334.6 642.1 334.7 644.0 331.0 C645.9 327.3 636.9 313.1 635.5 309.5" fill="none" stroke="#f280e0" stroke-width="1.2" stroke-linecap="round" stroke-linejoin="round" opacity="1"/>
<path d="M596.0 346.0 C598.3 347.0 607.3 348.7 610.0 352.0 C612.7 355.3 611.7 363.7 612.0 366.0" fill="none" stroke="#f280e0" stroke-width="1.2" stroke-linecap="round" stroke-linejoin="round" opacity="1"/>
<path d="M612.0 366.0 C612.7 361.7 614.0 345.8 616.0 340.0 C618.0 334.2 622.7 332.9 624.0 331.5" fill="none" stroke="#f280e0" stroke-width="1.1" stroke-linecap="round" stroke-linejoin="round" opacity="1"/>
<path d="M703.0 330.5 C702.9 324.5 702.6 300.7 702.5 294.7" fill="none" stroke="#f280e0" stroke-width="1.2" stroke-linecap="round" stroke-linejoin="round" opacity="1"/>
<path d="M702.5 294.7 C706.5 294.2 722.7 292.2 726.7 291.7" fill="none" stroke="#fdc21c" stroke-width="1.2" stroke-linecap="round" stroke-linejoin="round" opacity="1"/>
<path d="M435.0 365.5 C429.2 366.2 414.2 367.8 400.0 370.0 C385.8 372.2 362.5 376.3 350.0 378.5 C337.5 380.7 333.3 381.5 325.0 383.0 C316.7 384.5 308.3 385.9 300.0 387.5 C291.7 389.1 283.3 390.7 275.0 392.3 C266.7 393.9 256.7 395.5 250.0 397.0 C243.3 398.5 241.7 399.6 235.0 401.2 C228.3 402.8 218.3 404.4 210.0 406.3 C201.7 408.2 190.9 410.6 185.0 412.5 C179.1 414.4 176.2 417.1 174.4 418.0" fill="none" stroke="#f280e0" stroke-width="1.9" stroke-linecap="round" stroke-linejoin="round" opacity="1"/>
<path d="M174.4 418.5 C174.7 419.0 174.2 420.0 176.0 421.5 C177.8 423.0 179.3 424.6 185.0 427.5 C190.7 430.4 201.7 435.9 210.0 438.8 C218.3 441.7 226.7 443.2 235.0 445.0 C243.3 446.8 251.2 448.1 260.0 449.4 C268.8 450.6 276.7 451.6 287.5 452.5 C298.3 453.4 314.6 454.3 325.0 454.5 C335.4 454.7 345.8 453.9 350.0 453.8" fill="none" stroke="#f280e0" stroke-width="1.6" stroke-linecap="round" stroke-linejoin="round" opacity="1"/>
<path d="M176.3 416.9 C179.8 418.5 189.8 423.3 197.5 426.3 C205.2 429.3 212.1 432.3 222.5 435.0 C232.9 437.7 247.1 440.4 260.0 442.3 C272.9 444.2 285.7 445.9 300.0 446.5 C314.3 447.1 338.3 446.1 346.0 446.0" fill="none" stroke="#f280e0" stroke-width="1.5" stroke-linecap="round" stroke-linejoin="round" opacity="1"/>
<path d="M432.0 367.5 C426.7 368.5 412.0 371.3 400.0 373.5 C388.0 375.7 376.7 377.3 360.0 380.5 C343.3 383.7 320.0 388.3 300.0 392.5 C280.0 396.7 256.7 401.9 240.0 405.5 C223.3 409.1 210.5 411.9 200.0 414.0 C189.5 416.1 180.8 417.6 177.0 418.3" fill="none" stroke="#f280e0" stroke-width="1.1" stroke-linecap="round" stroke-linejoin="round" opacity="0.75"/>
<path d="M434.0 368.0 C433.7 368.5 436.3 368.5 432.0 371.0 C427.7 373.5 416.0 378.0 408.0 383.0 C400.0 388.0 392.0 393.5 384.0 401.0 C376.0 408.5 366.2 420.5 360.0 428.0 C353.8 435.5 348.8 443.0 346.5 446.0" fill="none" stroke="#f280e0" stroke-width="1.4" stroke-linecap="round" stroke-linejoin="round" opacity="1"/>
<path d="M433.0 371.0 C430.0 375.5 420.9 389.2 415.0 398.0 C409.1 406.8 400.4 419.2 397.5 423.5" fill="none" stroke="#f280e0" stroke-width="1.4" stroke-linecap="round" stroke-linejoin="round" opacity="1"/>
<path d="M346.0 446.0 C346.7 448.1 349.3 456.7 350.0 458.8" fill="none" stroke="#fdc21c" stroke-width="1.2" stroke-linecap="round" stroke-linejoin="round" opacity="1"/>
<path d="M397.5 423.8 C397.9 426.1 399.6 435.2 400.0 437.5" fill="none" stroke="#fdc21c" stroke-width="1.2" stroke-linecap="round" stroke-linejoin="round" opacity="1"/>
<g stroke="#5a7494" stroke-width="0.9" fill="none"><path d="M14 586 L17.5 570.5 M14 586 L33.5 588.5 M14 586 L16.5 580.5 M12.5 584.5 L15.5 587.5"/></g>
<text x="20.2" y="567.8" font-family="Liberation Sans, sans-serif" font-size="7.5" fill="#4c6688">y</text>
<text x="35.8" y="589.2" font-family="Liberation Sans, sans-serif" font-size="7.5" fill="#4c6688">x</text>
</svg>
<svg id="icons" class="abs" style="left:0;top:0" width="800" height="600" viewBox="0 0 800 600">
<defs>
<radialGradient id="gW" cx="35%" cy="30%" r="75%"><stop offset="0" stop-color="#ffffff"/><stop offset="0.6" stop-color="#d8d8d8"/><stop offset="1" stop-color="#6a6a6a"/></radialGradient>
<radialGradient id="gB" cx="38%" cy="28%" r="75%"><stop offset="0" stop-color="#9ab8ff"/><stop offset="0.35" stop-color="#2346c8"/><stop offset="1" stop-color="#08124a"/></radialGradient>
<radialGradient id="gG" cx="38%" cy="28%" r="75%"><stop offset="0" stop-color="#8ad868"/><stop offset="0.4" stop-color="#257a18"/><stop offset="1" stop-color="#061a06"/></radialGradient>
<radialGradient id="gH" cx="40%" cy="28%" r="75%"><stop offset="0" stop-color="#8fb0ff"/><stop offset="0.5" stop-color="#2a55d8"/><stop offset="1" stop-color="#14247a"/></radialGradient>
<radialGradient id="gW2" cx="40%" cy="35%" r="70%"><stop offset="0" stop-color="#e2e2e2"/><stop offset="0.6" stop-color="#a8a8a8"/><stop offset="1" stop-color="#5e5e5e"/></radialGradient>
<radialGradient id="gW3" cx="40%" cy="25%" r="70%"><stop offset="0" stop-color="#ffffff"/><stop offset="0.55" stop-color="#c4c4c4"/><stop offset="1" stop-color="#3e3e3e"/></radialGradient>
</defs>
<path d="M-2 80 h8 v10 h-8z" fill="#f2f2f2"/><path d="M2 78.5 l5 1 l-1 3 l-5 -1z" fill="#ffffff"/>
<path d="M17.2 79 L22 87 M23.3 79 L18.5 87" stroke="#f0f0f0" stroke-width="1.5" stroke-linecap="round"/>
<circle cx="18" cy="88.5" r="1.6" fill="none" stroke="#2d5a9e" stroke-width="1.4"/><circle cx="22.5" cy="88.5" r="1.6" fill="none" stroke="#2d5a9e" stroke-width="1.4"/>
<path d="M33.5 79 h4.2 l1.6 1.6 v6.6 h-5.8z" fill="#f4f4f4" stroke="#3a3a3a" stroke-width="0.5"/>
<path d="M36.3 81.8 h3.6 l1.8 1.8 v6.9 h-5.4z" fill="#ffffff" stroke="#3a3a3a" stroke-width="0.6"/>
<rect x="51" y="79.4" width="8" height="11.2" rx="0.7" fill="#f6c944"/><rect x="53.2" y="78.6" width="3.6" height="2.8" rx="0.6" fill="#2e2a22"/><rect x="52.4" y="81.2" width="5.2" height="0.9" fill="#c79d30"/>
<path d="M68 86.5 C69.5 81.5 75 80.5 78.5 84.5" fill="none" stroke="#b9b9b9" stroke-width="2.3"/><path d="M65.8 84.2 l5 -2.6 l0.4 5.2z" fill="#c4c4c4"/>
<path d="M76.8 92.6 l3.5 0 l0 -3.5z" fill="#8e8e8e"/>
<path d="M86.2 84.5 l1.2 1.6 v-5.6 q0.7 -0.9 1.4 0 v-1.4 q0.8 -0.9 1.6 0 v0.5 q0.8 -0.9 1.6 0 v1.2 q0.7 -0.8 1.4 0 v6.2 q0 3.6 -3 4 h-2.4 q-1.4 -0.4 -2.2 -2.2 l-1.8 -3.6 q0.6 -1.4 2.2 -0.7z" fill="#f8f8f8" stroke="#555" stroke-width="0.4"/>
<ellipse cx="107" cy="85" rx="6" ry="2.3" fill="none" stroke="#8f8f8f" stroke-width="1"/><ellipse cx="107.8" cy="86" rx="2.2" ry="5.2" fill="none" stroke="#8f8f8f" stroke-width="1"/><path d="M107.3 80.5 v8.5 M103 85 h8.5" stroke="#dcdcdc" stroke-width="0.9"/>
<circle cx="126.6" cy="83.0" r="3.9" fill="none" stroke="#e4e4e4" stroke-width="1.3"/>
<path d="M123.8 85.8 l-3.6 3.8" stroke="#e4e4e4" stroke-width="1.8" stroke-linecap="round"/>
<path d="M124.2 82.8 h4.2 M126.3 80.9 v1" stroke="#e0e0e0" stroke-width="1.1"/>
<rect x="139" y="78.6" width="9.5" height="8.6" fill="none" stroke="#cfcfcf" stroke-width="1" stroke-dasharray="1.4 1.2"/>
<circle cx="143.0" cy="84.0" r="3.3" fill="none" stroke="#e4e4e4" stroke-width="1.3"/>
<path d="M140.6 86.4 l-3.6 3.8" stroke="#e4e4e4" stroke-width="1.8" stroke-linecap="round"/>
<path d="M153 81 v-2.4 h2.4 M163.2 78.6 h2.4 v2.4 M165.6 88.4 v2.4 h-2.4 M155.4 90.8 h-2.4 v-2.4" fill="none" stroke="#f4f4f4" stroke-width="1.2"/>
<circle cx="160.2" cy="83.8" r="3.8" fill="none" stroke="#e4e4e4" stroke-width="1.3"/>
<path d="M157.5 86.5 l-3.6 3.8" stroke="#e4e4e4" stroke-width="1.8" stroke-linecap="round"/>
<circle cx="178.5" cy="83.4" r="4.0" fill="#7e7a20" stroke="#d8d4a0" stroke-width="1.3"/>
<path d="M175.6 86.3 l-3.6 3.8" stroke="#d8d4a0" stroke-width="1.8" stroke-linecap="round"/>
<rect x="175.8" y="82.8" width="2.4" height="2.4" fill="#ffee30"/><rect x="178.4" y="80.8" width="2.4" height="2.4" fill="#fff36a"/>
<circle cx="195.5" cy="85.2" r="3.3" fill="none" stroke="#d0d0d0" stroke-width="1.3"/>
<path d="M193.1 87.6 l-3.6 3.8" stroke="#d0d0d0" stroke-width="1.8" stroke-linecap="round"/>
<path d="M189.5 82.5 C191.5 78.6 197 78.4 199.6 81.6" fill="none" stroke="#c9c9c9" stroke-width="1.7"/><path d="M187.6 81 l3.8 -1.4 l0.2 3.8z" fill="#d0d0d0"/>
<path d="M198.8 92.6 l3.5 0 l0 -3.5z" fill="#8e8e8e"/>
<rect x="204.6" y="79.0" width="5.7" height="5.3" fill="#d9d9d9"/>
<rect x="211.2" y="79.0" width="5.7" height="5.3" fill="#d9d9d9"/>
<rect x="204.6" y="85.2" width="5.7" height="5.3" fill="#d9d9d9"/>
<rect x="211.2" y="85.2" width="5.7" height="5.3" fill="#d9d9d9"/>
<path d="M215.8 92.6 l3.5 0 l0 -3.5z" fill="#8e8e8e"/>
<path d="M221.6 86.8 q-0.3 -2.6 2.4 -3 l1.8 -2.2 q3.2 -1 5.8 0.4 l1.6 1.6 q2.4 0.4 2.2 3.2z" fill="#d42222"/><path d="M226.2 82.2 l3 -0.4 l0.2 1.6 l-4 0.2z" fill="#f3b8b8"/><circle cx="225" cy="87.2" r="1.3" fill="#7a1010"/><circle cx="232" cy="87.2" r="1.3" fill="#7a1010"/>
<path d="M233.3 92.6 l3.5 0 l0 -3.5z" fill="#8e8e8e"/>
<path d="M239.4 84.6 l7.6 -4.4 l5.2 5.6 l-7.6 5z" fill="#5c4a4a" stroke="#b49a9a" stroke-width="0.8"/><rect x="244.4" y="83.6" width="3" height="3" fill="#efefef" stroke="#444" stroke-width="0.5"/>
<path d="M250.8 92.6 l3.5 0 l0 -3.5z" fill="#8e8e8e"/>
<circle cx="262.3" cy="84.6" r="5.6" fill="none" stroke="#8c8c8c" stroke-width="0.9"/><circle cx="262" cy="84.6" r="1.3" fill="#ffffff"/><path d="M262 84.6 h7.6" stroke="#ffffff" stroke-width="1"/>
<path d="M268.3 92.6 l3.5 0 l0 -3.5z" fill="#8e8e8e"/>
<rect x="275.8" y="80" width="4.2" height="4.2" fill="#ffe63a"/><rect x="281.8" y="81" width="4.6" height="4.4" fill="#ffe63a"/><rect x="278" y="86.4" width="3" height="3" fill="#d88a2a"/><path d="M283.8 78.2 h3.2 v3 M277 91 h-3 v-3" fill="none" stroke="#d0d0d0" stroke-width="0.9"/>
<path d="M286.3 92.6 l3.5 0 l0 -3.5z" fill="#8e8e8e"/>
<path d="M297.6 78.2 c6 0 5.6 6 2.6 8.4 v2 h-5.2 v-2 c-3 -2.4 -3.4 -8.4 2.6 -8.4z" fill="url(#gW2)"/><rect x="295.6" y="88.6" width="4" height="2.6" rx="0.8" fill="#8f8f8f"/>
<path d="M302.8 92.6 l3.5 0 l0 -3.5z" fill="#8e8e8e"/>
<path d="M312.8 83.6 v-2 a2.4 2.4 0 0 1 4.8 0 v2" fill="none" stroke="#d0d0d0" stroke-width="1.2"/><rect x="311.2" y="83.4" width="8" height="6" fill="#f2f2f2"/><rect x="314.6" y="85.2" width="1.3" height="2.4" fill="#555"/>
<path d="M319.8 92.6 l3.5 0 l0 -3.5z" fill="#8e8e8e"/>
<path d="M327.6 85.6 l4.4 3.8 l8 -3.2 l0 -1.6z" fill="#2a4a9a"/><path d="M327.6 83.6 l4.6 3.6 l8 -3 l-0.2 -1.4z" fill="#f4f4f4"/><path d="M327.4 80 l5.4 3.8 l7.4 -2.8 l-1 -1.4 q-6 1.6 -11.8 0.4z" fill="#e03a22"/>
<path d="M338.3 92.6 l3.5 0 l0 -3.5z" fill="#8e8e8e"/>
<path d="M349.60 79.80 A5.0 5.0 0 0 1 353.31 81.45" fill="none" stroke="#ff2a2a" stroke-width="3"/>
<path d="M353.14 81.26 A5.0 5.0 0 0 1 354.59 85.05" fill="none" stroke="#ffb000" stroke-width="3"/>
<path d="M354.60 84.80 A5.0 5.0 0 0 1 352.95 88.51" fill="none" stroke="#e8ff20" stroke-width="3"/>
<path d="M353.14 88.34 A5.0 5.0 0 0 1 349.35 89.79" fill="none" stroke="#30e030" stroke-width="3"/>
<path d="M349.60 89.80 A5.0 5.0 0 0 1 345.89 88.15" fill="none" stroke="#20d8d8" stroke-width="3"/>
<path d="M346.06 88.34 A5.0 5.0 0 0 1 344.61 84.55" fill="none" stroke="#2a50ff" stroke-width="3"/>
<path d="M344.60 84.80 A5.0 5.0 0 0 1 346.25 81.09" fill="none" stroke="#a020f0" stroke-width="3"/>
<path d="M346.06 81.26 A5.0 5.0 0 0 1 349.85 79.81" fill="none" stroke="#ff20c0" stroke-width="3"/>
<path d="M355.3 92.6 l3.5 0 l0 -3.5z" fill="#8e8e8e"/>
<circle cx="367" cy="84.6" r="5.8" fill="url(#gW3)"/><path d="M361.4 84 h11.2 M367 79 v11" stroke="#8a8a8a" stroke-width="0.5"/>
<path d="M377.6 80.2 h14 M377.6 83.6 h14 M377.6 87 h14 M377.6 90.4 h14 M379 78.4 v13.6 M382.6 78.4 v13.6 M386.2 78.4 v13.6 M389.8 78.4 v13.6" stroke="#c9c9c9" stroke-width="0.7"/><circle cx="384.6" cy="84.4" r="4.8" fill="url(#gW)"/>
<circle cx="401.6" cy="84.8" r="6.3" fill="url(#gB)"/>
<path d="M407.3 92.6 l3.5 0 l0 -3.5z" fill="#8e8e8e"/>
<circle cx="417.6" cy="86" r="5.2" fill="url(#gW)"/><path d="M419.6 81.8 l5 -3.6 l-0.4 6.2z" fill="#e89a20"/>
<path d="M424.3 92.6 l3.5 0 l0 -3.5z" fill="#8e8e8e"/>
<circle cx="436.2" cy="85" r="3.7" fill="none" stroke="#e4b820" stroke-width="2.4"/>
<rect x="-1.1" y="-6.3" width="2.2" height="2.4" fill="#e4b820" transform="translate(436.2 85) rotate(0)"/>
<rect x="-1.1" y="-6.3" width="2.2" height="2.4" fill="#e4b820" transform="translate(436.2 85) rotate(45)"/>
<rect x="-1.1" y="-6.3" width="2.2" height="2.4" fill="#e4b820" transform="translate(436.2 85) rotate(90)"/>
<rect x="-1.1" y="-6.3" width="2.2" height="2.4" fill="#e4b820" transform="translate(436.2 85) rotate(135)"/>
<rect x="-1.1" y="-6.3" width="2.2" height="2.4" fill="#e4b820" transform="translate(436.2 85) rotate(180)"/>
<rect x="-1.1" y="-6.3" width="2.2" height="2.4" fill="#e4b820" transform="translate(436.2 85) rotate(225)"/>
<rect x="-1.1" y="-6.3" width="2.2" height="2.4" fill="#e4b820" transform="translate(436.2 85) rotate(270)"/>
<rect x="-1.1" y="-6.3" width="2.2" height="2.4" fill="#e4b820" transform="translate(436.2 85) rotate(315)"/>
<path d="M442.3 92.6 l3.5 0 l0 -3.5z" fill="#8e8e8e"/>
<path d="M448.6 79.4 h5 M449.2 79.4 v7 h5.6 M454.8 83 v8 M461 84.4 v6.6 M454.8 89.4 h6.2" fill="none" stroke="#eaeaea" stroke-width="0.9"/><circle cx="454.6" cy="79.2" r="1.1" fill="#333" stroke="#eaeaea" stroke-width="0.7"/><circle cx="454.8" cy="84.8" r="1.1" fill="#333" stroke="#eaeaea" stroke-width="0.7"/><circle cx="461" cy="84.6" r="1.1" fill="#333" stroke="#eaeaea" stroke-width="0.7"/>
<circle cx="471" cy="84.6" r="6.5" fill="url(#gG)"/><path d="M467.6 87.6 q0.6 -4.2 4.2 -4.6 v-1.8 l3.4 2.8 l-3.4 2.6 v-1.6 q-2.4 0.2 -4.2 2.6z" fill="#eaffd8"/>
<path d="M476.8 92.6 l3.5 0 l0 -3.5z" fill="#8e8e8e"/>
<circle cx="488.6" cy="84.6" r="6.5" fill="url(#gH)"/><text x="488.6" y="88.4" font-family="Liberation Sans, sans-serif" font-weight="700" font-size="10.5" fill="#ffffff" text-anchor="middle">?</text>
<path d="M494.3 92.6 l3.5 0 l0 -3.5z" fill="#8e8e8e"/>
<circle cx="506.2" cy="83.8" r="6.6" fill="#cc1c1c"/><path d="M502 82 q0 -1.8 2.6 -1.8 h2.4 q2.6 0 2.6 1.8 q0 1.8 -2.6 1.8 h-1.4 l-1.6 1.4 v-1.4 q-2 0 -2 -1.8z" fill="none" stroke="#ffffff" stroke-width="0.8"/><path d="M506 86.4 q3.6 0.6 4.6 -1.8 l0.6 2.6 l-1.4 -0.4 q-1.4 1.2 -3.8 -0.4z" fill="#ffffff"/>
<path d="M48.7 99.6 v8.2" stroke="#dfe8ff" stroke-width="0.8"/><path d="M49.9 103 h3.6 l-1.8 2.2z" fill="#ffffff"/>
</svg>
<span class="t" style="left:-3.5px;top:1.3px;font-size:7.4px;line-height:12px;color:#e4e4e4;transform:scaleX(0.986)">dm (7 MB) - Rhino 8 Not For Resale Lab - [Perspective]</span>
<span class="t" style="left:-6.5px;top:13.3px;font-size:7.3px;line-height:12px;color:#d6d6d6;transform:scaleX(1.028)">視(V)</span>
<span class="t" style="left:21.0px;top:13.3px;font-size:7.3px;line-height:12px;color:#d6d6d6;transform:scaleX(0.970)">曲線(C)</span>
<span class="t" style="left:54.0px;top:13.3px;font-size:7.3px;line-height:12px;color:#d6d6d6;transform:scaleX(0.987)">曲面(S)</span>
<span class="t" style="left:87.0px;top:13.3px;font-size:7.3px;line-height:12px;color:#d6d6d6;transform:scaleX(1.021)">SubD(U)</span>
<span class="t" style="left:125.0px;top:13.3px;font-size:7.3px;line-height:12px;color:#d6d6d6;transform:scaleX(1.034)">實體(O)</span>
<span class="t" style="left:160.0px;top:13.3px;font-size:7.3px;line-height:12px;color:#d6d6d6;transform:scaleX(1.057)">網格(M)</span>
<span class="t" style="left:196.0px;top:13.3px;font-size:7.3px;line-height:12px;color:#d6d6d6;transform:scaleX(1.011)">製圖(D)</span>
<span class="t" style="left:229.5px;top:13.3px;font-size:7.3px;line-height:12px;color:#d6d6d6;transform:scaleX(1.012)">變動(T)</span>
<span class="t" style="left:262.5px;top:13.3px;font-size:7.3px;line-height:12px;color:#d6d6d6;transform:scaleX(0.987)">工具(L)</span>
<span class="t" style="left:295.0px;top:13.3px;font-size:7.3px;line-height:12px;color:#d6d6d6;transform:scaleX(0.974)">分析(A)</span>
<span class="t" style="left:328.0px;top:13.3px;font-size:7.3px;line-height:12px;color:#d6d6d6;transform:scaleX(0.991)">彩現(R)</span>
<span class="t" style="left:362.0px;top:13.3px;font-size:7.3px;line-height:12px;color:#d6d6d6;transform:scaleX(0.959)">縮放</span>
<span class="t" style="left:385.0px;top:13.3px;font-size:7.3px;line-height:12px;color:#d6d6d6;transform:scaleX(0.953)">IP對出</span>
<span class="t" style="left:415.0px;top:13.3px;font-size:7.3px;line-height:12px;color:#d6d6d6;transform:scaleX(1.146)">Morph</span>
<span class="t" style="left:448.0px;top:13.3px;font-size:7.3px;line-height:12px;color:#d6d6d6;transform:scaleX(1.006)">視窗(W)</span>
<span class="t" style="left:483.7px;top:13.3px;font-size:7.3px;line-height:12px;color:#d6d6d6;transform:scaleX(1.011)">說明(H)</span>
<span class="t" style="left:-4.5px;top:24.0px;font-size:7.3px;line-height:12px;color:#d4d4d4;transform:scaleX(0.977)">選取集合 •</span>
<span class="t" style="left:0.6px;top:36.3px;font-size:7.3px;line-height:12px;color:#d4d4d4;transform:scaleX(1.033)">選取集合 •</span>
<span class="t" style="left:6.5px;top:63.9px;font-size:7.8px;line-height:12px;color:#7d7d7d;transform:scaleX(1.010)">設定視圖</span>
<span class="t" style="left:51.5px;top:63.9px;font-size:7.8px;line-height:12px;color:#7d7d7d;transform:scaleX(1.122)">顯示</span>
<span class="t" style="left:80.0px;top:63.9px;font-size:7.8px;line-height:12px;color:#7d7d7d;transform:scaleX(1.026)">擷取</span>
<span class="t" style="left:108.0px;top:63.9px;font-size:7.8px;line-height:12px;color:#7d7d7d;transform:scaleX(1.069)">作業視窗配置</span>
<span class="t" style="left:171.0px;top:63.9px;font-size:7.8px;line-height:12px;color:#7d7d7d;transform:scaleX(1.026)">可見性</span>
<span class="t" style="left:208.0px;top:63.9px;font-size:7.8px;line-height:12px;color:#7d7d7d;transform:scaleX(1.026)">變動</span>
<span class="t" style="left:237.0px;top:63.9px;font-size:7.8px;line-height:12px;color:#7d7d7d;transform:scaleX(1.010)">曲線工具</span>
<span class="t" style="left:283.0px;top:63.9px;font-size:7.8px;line-height:12px;color:#7d7d7d;transform:scaleX(1.010)">曲面工具</span>
<span class="t" style="left:328.0px;top:63.9px;font-size:7.8px;line-height:12px;color:#7d7d7d;transform:scaleX(1.026)">實體工具</span>
<span class="t" style="left:373.0px;top:63.9px;font-size:7.8px;line-height:12px;color:#7d7d7d;transform:scaleX(1.047)">SubD 工具</span>
<span class="t" style="left:425.0px;top:63.9px;font-size:7.8px;line-height:12px;color:#7d7d7d;transform:scaleX(1.026)">網格工具</span>
<span class="t" style="left:471.0px;top:63.9px;font-size:7.8px;line-height:12px;color:#7d7d7d;transform:scaleX(1.026)">彩現工具</span>
<span class="t" style="left:516.5px;top:63.9px;font-size:7.8px;line-height:12px;color:#7d7d7d;transform:scaleX(0.994)">製圖</span>
<span class="t" style="left:545.0px;top:63.9px;font-size:7.8px;line-height:12px;color:#7d7d7d;transform:scaleX(1.049)">V8 的新功能</span>
<span class="t" style="left:0.3px;top:97.8px;font-size:8.4px;line-height:12px;color:#ffffff;transform:scaleX(0.960);-webkit-text-stroke:0.3px #fff">Perspective</span>
</body>
</html>
